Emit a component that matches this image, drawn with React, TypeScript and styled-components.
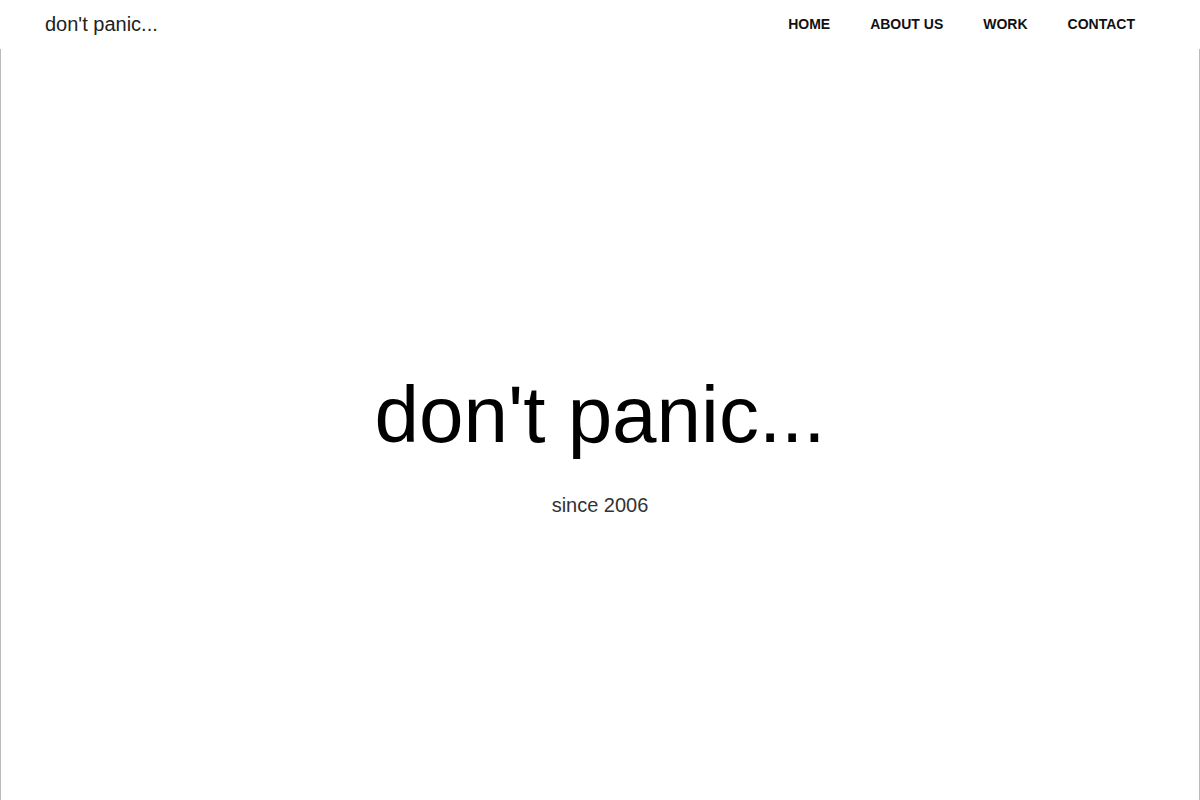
import React from "react";
import styled, { createGlobalStyle } from "styled-components";

const GlobalStyle = createGlobalStyle`
  html, body {
    margin: 0;
    padding: 0;
    background: #fff;
    font-family: "Liberation Sans", Arial, sans-serif;
  }
`;

const Header = styled.header`
  height: 49px;
  display: flex;
  align-items: center;
  justify-content: space-between;
  padding: 0 65px 0 45px;
  background: #fff;
`;

const Logo = styled.a`
  font-size: 20px;
  line-height: 23px;
  color: #222;
  text-decoration: none;
`;

const Nav = styled.nav`
  display: flex;
  gap: 40px;
  padding-bottom: 2px;
`;

const NavItem = styled.a`
  font-size: 14px;
  line-height: 16px;
  font-weight: 700;
  text-transform: uppercase;
  color: #111;
  text-decoration: none;
`;

const Hero = styled.main`
  height: calc(100vh - 49px);
  box-sizing: border-box;
  border-left: 1px solid #bbb;
  border-right: 1px solid #bbb;
  display: flex;
  flex-direction: column;
  align-items: center;
  justify-content: center;
  padding-top: 42px;
`;

const Title = styled.h1`
  margin: 0;
  font-size: 80px;
  line-height: 80px;
  font-weight: 400;
  color: #000;
`;

const Subtitle = styled.p`
  margin: 38px 0 0;
  font-size: 20px;
  line-height: 24px;
  color: #333;
`;

const links = ["Home", "About us", "Work", "Contact"];

export default function App() {
  return (
    <>
      <GlobalStyle />
      <Header>
        <Logo href="#">don't panic...</Logo>
        <Nav>
          {links.map((l) => (
            <NavItem key={l} href="#">
              {l}
            </NavItem>
          ))}
        </Nav>
      </Header>
      <Hero>
        <Title>don't panic...</Title>
        <Subtitle>since 2006</Subtitle>
      </Hero>
    </>
  );
}
